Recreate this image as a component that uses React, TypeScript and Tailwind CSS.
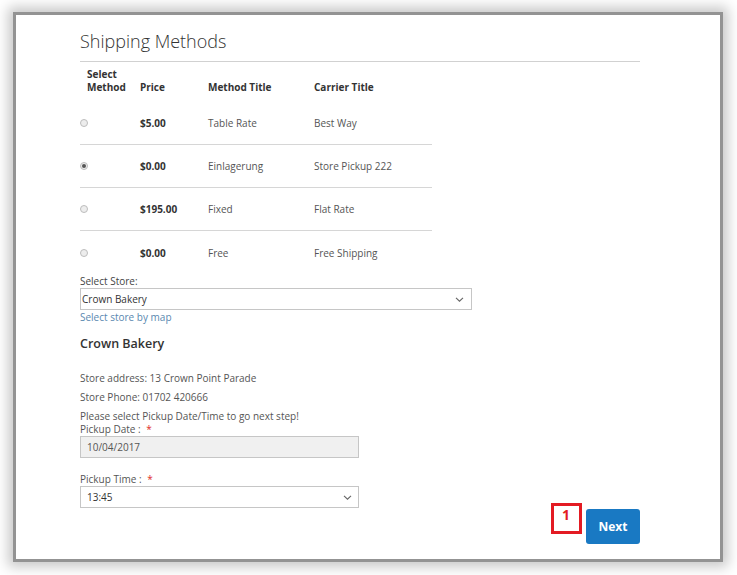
import React from "react";

const Chevron = () => (
  <svg width="9" height="5" viewBox="0 0 9 5" fill="none">
    <path d="M1 0.8 L4.5 4.2 L8 0.8" stroke="#666" strokeWidth="1.1" />
  </svg>
);

const Radio = ({ checked }: { checked?: boolean }) => (
  <span className="flex h-[8px] w-[8px] items-center justify-center rounded-full border border-[#bdbdbd] bg-[#ededed]">
    {checked && <span className="h-[4px] w-[4px] rounded-full bg-[#555]" />}
  </span>
);

const rows = [
  { price: "$5.00", method: "Table Rate", carrier: "Best Way" },
  { price: "$0.00", method: "Einlagerung", carrier: "Store Pickup 222", checked: true },
  { price: "$195.00", method: "Fixed", carrier: "Flat Rate" },
  { price: "$0.00", method: "Free", carrier: "Free Shipping" },
];

export default function App() {
  return (
    <div className="h-[575px] w-[737px] bg-white pl-[13px] pt-[12px] font-['Open_Sans',sans-serif] text-[#333]">
      <div className="h-[550px] w-[710px] border-[3px] border-[#939393] bg-white pl-[64px] pt-[14px] shadow-[0_0_12px_5px_rgba(0,0,0,0.22)]">
        <div className="w-[560px]">
          <h1 className="text-[18px] font-light leading-[24px] text-[#333]">Shipping Methods</h1>
          <div className="mt-[8px] h-px w-[560px] bg-[#d1d1d1]" />

          <div className="mt-[6px] w-[352px]">
            <div className="grid grid-cols-[53px_68px_106px_125px] items-end pb-[8px] text-[10px] font-bold leading-[13px] text-[#333]">
              <div className="pl-[7px]">
                Select
                <br />
                Method
              </div>
              <div className="pl-[7px]">Price</div>
              <div className="pl-[7px]">Method Title</div>
              <div className="pl-[7px]">Carrier Title</div>
            </div>
            {rows.map((r, i) => (
              <div
                key={i}
                className={`grid h-[43px] grid-cols-[53px_68px_106px_125px] items-center text-[10px] leading-[14px] ${
                  i < rows.length - 1 ? "border-b border-[#d6d6d6]" : ""
                }`}
              >
                <div>
                  <Radio checked={r.checked} />
                </div>
                <div className="pl-[7px] font-bold text-[#333]">{r.price}</div>
                <div className="pl-[7px] text-[#555]">{r.method}</div>
                <div className="pl-[7px] text-[#555]">{r.carrier}</div>
              </div>
            ))}
          </div>

          <div className="text-[10px] leading-[14px] text-[#444]">Select Store:</div>
          <div className="flex h-[22px] w-[392px] items-center justify-between border border-[#c6c6c6] pl-[1px] pr-[7px] text-[10px] text-[#333]">
            <span>Crown Bakery</span>
            <Chevron />
          </div>
          <div className="text-[10px] leading-[14px] text-[#5a88b0]">Select store by map</div>

          <h2 className="mt-[10px] text-[12.5px] font-semibold leading-[20px] text-[#333]">Crown Bakery</h2>

          <div className="mt-[17px] text-[10px] leading-[14px] text-[#555]">Store address: 13 Crown Point Parade</div>
          <div className="mt-[5px] text-[10px] leading-[14px] text-[#555]">Store Phone: 01702 420666</div>
          <div className="mt-[6px] text-[10px] leading-[13px] text-[#555]">Please select Pickup Date/Time to go next step!</div>
          <div className="text-[10px] leading-[13px] text-[#555]">
            Pickup Date : <span className="ml-[3px] text-[#e02b27]">*</span>
          </div>
          <div className="flex h-[22px] w-[279px] items-center border border-[#c6c6c6] bg-[#f0f0f0] pl-[6px] text-[10px] text-[#555]">
            10/04/2017
          </div>

          <div className="mt-[14px] text-[10px] leading-[14px] text-[#555]">
            Pickup Time : <span className="ml-[3px] text-[#e02b27]">*</span>
          </div>
          <div className="flex h-[22px] w-[279px] items-center justify-between border border-[#c6c6c6] bg-white pl-[6px] pr-[6px] text-[10px] text-[#333]">
            <span>13:45</span>
            <Chevron />
          </div>

          <div className="flex justify-end pt-[1px]">
            <div className="relative">
              <div className="absolute right-[calc(100%+4px)] top-[-6px] h-[31px] w-[31px] border-[3px] border-[#e31b23] bg-white pl-[8px] text-[14px] font-bold leading-[18px] text-[#e31b23]">
                1
              </div>
              <button className="h-[35px] w-[54px] rounded-[3px] bg-[#1979c3] text-[12px] font-bold text-white">
                Next
              </button>
            </div>
          </div>
        </div>
      </div>
    </div>
  );
}
